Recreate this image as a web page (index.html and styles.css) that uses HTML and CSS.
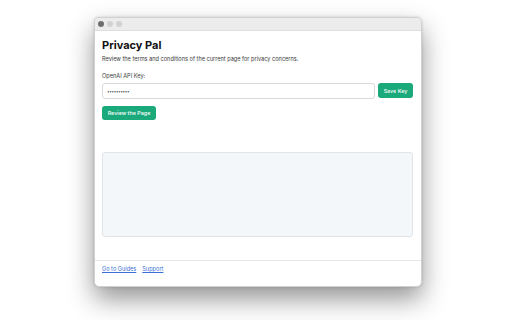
FILE: index.html
```html
<!DOCTYPE html>
<html>

<head>
    <meta charset="utf-8">
    <title>Privacy Pal</title>
    <link rel="stylesheet" href="styles.css">
</head>

<body>
    <div id="stage">
        <div id="window">
            <div class="titlebar">
                <span class="dot dark"></span>
                <span class="dot"></span>
                <span class="dot"></span>
            </div>
            <main class="content">
                <h1>Privacy Pal</h1>
                <p class="desc">Review the terms and conditions of the current page for privacy concerns.</p>
                <label for="apikey" class="label">OpenAI API Key:</label>
                <div class="keyrow">
                    <input type="password" id="apikey" value="sk-1234567">
                    <button class="btn save">Save Key</button>
                </div>
                <div>
                    <button class="btn review">Review the Page</button>
                </div>
                <div class="result"></div>
            </main>
            <div class="footer">
                <a href="#">Go to Guides</a>
                <a href="#">Support</a>
            </div>
        </div>
    </div>
</body>

</html>
```

FILE: styles.css
```css
* {
    box-sizing: border-box;
    margin: 0px;
    padding: 0px;
    font-family: Inter, "Noto Sans", sans-serif;
}

html,
body {
    height: 100%;
    background: #ffffff;
}

#stage {
    height: 320px;
    padding: 17px 0px 33px 94px;
}

#window {
    width: 328px;
    height: 270px;
    display: flex;
    flex-direction: column;
    border-radius: 5px;
    border: 1px solid #d0d0d0;
    background: #ffffff;
    overflow: hidden;
    box-shadow: 0px 12px 26px rgba(0, 0, 0, 0.42), 0px 0px 3px rgba(0, 0, 0, 0.15);
}

.titlebar {
    height: 13px;
    display: flex;
    align-items: center;
    gap: 3px;
    padding-left: 3px;
    background: #ececec;
    border-bottom: 1px solid #dedede;
}

.dot {
    width: 6px;
    height: 6px;
    border-radius: 50%;
    background: #d2d2d2;
}

.dot.dark {
    background: #6e6e6e;
}

.content {
    flex: 1;
    display: flex;
    flex-direction: column;
    padding: 7px 8px 0px 7px;
}

h1 {
    font-size: 11px;
    line-height: 14px;
    font-weight: 700;
    color: #111111;
}

.desc {
    margin-top: 3px;
    font-size: 5.6px;
    line-height: 8px;
    color: #3a3a3a;
}

.label {
    margin-top: 9px;
    font-size: 5.6px;
    line-height: 8px;
    color: #3a3a3a;
}

.keyrow {
    margin-top: 3px;
    display: flex;
    gap: 3px;
}

input {
    flex: 1;
    height: 16px;
    padding: 0px 4px;
    font-size: 4.5px;
    letter-spacing: -0.3px;
    color: #555555;
    border: 1px solid #d9d9d9;
    border-radius: 3px;
    outline: none;
}

.btn {
    height: 15px;
    border: none;
    border-radius: 3px;
    background: #19a97b;
    color: #ffffff;
    font-size: 5.4px;
    font-weight: 500;
}

.save {
    width: 35px;
}

.review {
    margin-top: 6px;
    width: 54px;
    height: 14px;
}

.result {
    margin-top: 32px;
    height: 85px;
    border: 1px solid #e0e4e8;
    border-radius: 3px;
    background: #f4f7fa;
}

.footer {
    height: 26px;
    display: flex;
    gap: 6px;
    padding: 4px 7px 0px;
    border-top: 1px solid #e6e6e6;
}

.footer a {
    font-size: 5.6px;
    line-height: 8px;
    color: #3a6fd8;
}
```
